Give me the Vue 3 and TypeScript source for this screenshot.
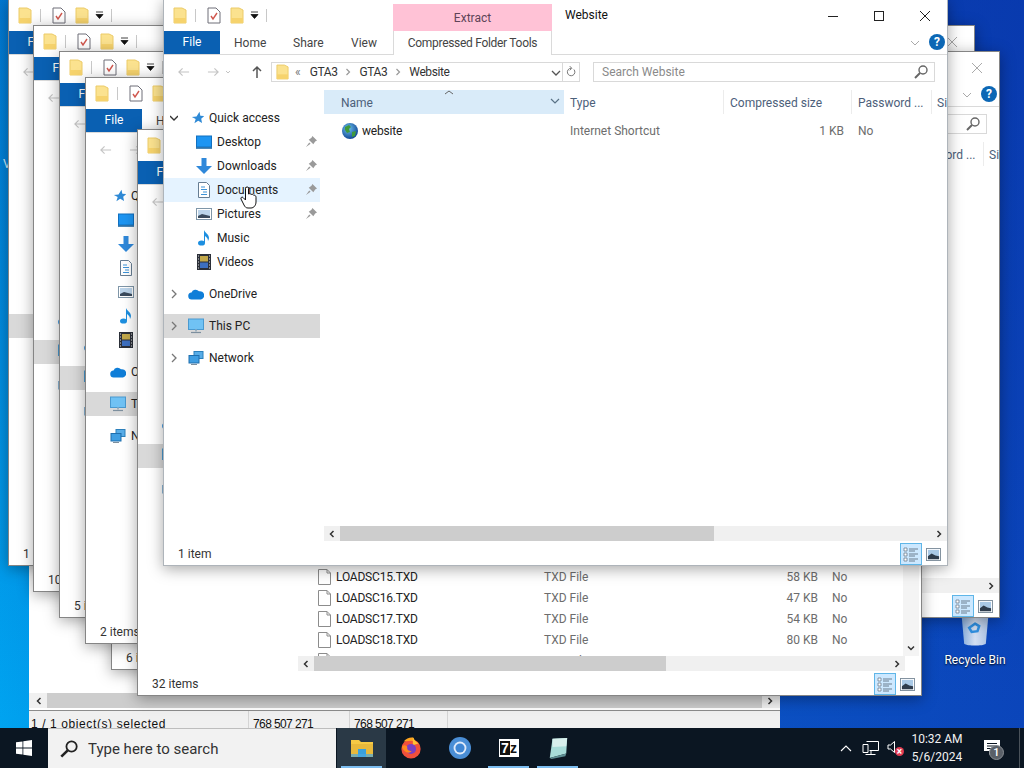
<template>
  <div class="desktop">
    <svg class="sprites" aria-hidden="true">
      <defs>
        <radialGradient id="globe-g" cx="40%" cy="35%" r="70%">
          <stop offset="0" stop-color="#6fc3f0" />
          <stop offset="1" stop-color="#0b3f8f" />
        </radialGradient>
        <linearGradient id="bin-g" x1="0" x2="1">
          <stop offset="0" stop-color="#8fb4dc" />
          <stop offset="0.5" stop-color="#e9f0f8" />
          <stop offset="1" stop-color="#b9cde6" />
        </linearGradient>
        <symbol id="i-folder" viewBox="0 0 14 17">
          <path d="M1 1h8l4 2v13H1z" fill="#fbe28f" stroke="#eccb68" />
          <path d="M1 11h12v5H1z" fill="#f6d36d" />
        </symbol>
        <symbol id="i-props" viewBox="0 0 14 17">
          <path d="M1 1h8l4 4v11H1z" fill="#fff" stroke="#6e6e78" />
          <path d="M4 9l2 3 4-6" fill="none" stroke="#d0574e" stroke-width="1.4" />
        </symbol>
        <symbol id="i-star" viewBox="0 0 16 16">
          <path transform="translate(3 1) scale(0.85)" d="M10 1l1 4.500 4.500.5-3.500 3 1 5-4.500-2.500L4 14.500l1.500-5L1 7l5.500-.5z" fill="#2f8ad6" />
        </symbol>
        <symbol id="i-desktop" viewBox="0 0 16 14">
          <rect x="0.500" y="1" width="15" height="11" fill="#1d95f2" stroke="#1170c0" />
          <path d="M0 13h16" stroke="#0f5f9f" stroke-width="1.500" />
        </symbol>
        <symbol id="i-download" viewBox="0 0 16 16">
          <path d="M5.500 0h5v8H16l-8 8-8-8h5.500z" fill="#2f88da" />
        </symbol>
        <symbol id="i-doc" viewBox="0 0 14 16">
          <path d="M1.500.5h8l3 3v12h-11z" fill="#fff" stroke="#667d93" />
          <path d="M4 5h4M4 7.500h6M6 10h4M4 12.500h6" stroke="#3d93d8" />
        </symbol>
        <symbol id="i-pictures" viewBox="0 0 16 12">
          <rect x="0.500" y="0.500" width="15" height="11" fill="#fff" stroke="#7f96a8" />
          <rect x="2" y="2" width="12" height="8" fill="#bcd4ea" />
          <path d="M2 8l4-2 4 1 4 1v2H2z" fill="#3a4a5c" />
        </symbol>
        <symbol id="i-music" viewBox="0 0 14 16">
          <ellipse cx="4.500" cy="13" rx="3.500" ry="2.600" fill="#1d8fe0" />
          <path d="M7 13V0c1 3 5 4 5 8 0 1-.5 2-1 3 0-3-2-4-3-5v7z" fill="#1d8fe0" />
        </symbol>
        <symbol id="i-video" viewBox="0 0 14 16">
          <rect width="14" height="16" fill="#2b2f38" />
          <rect x="3" y="2" width="8" height="5.500" fill="#c2a84a" />
          <rect x="3" y="8.500" width="8" height="5.500" fill="#3d6fc0" />
          <path d="M1 2h1M1 5h1M1 8h1M1 11h1M1 14h1M12 2h1M12 5h1M12 8h1M12 11h1M12 14h1" stroke="#ddd" />
        </symbol>
        <symbol id="i-cloud" viewBox="0 0 16 11">
          <path d="M4 11a3.500 3.500 0 0 1-.5-7A4.500 4.500 0 0 1 11 2.800 4 4 0 0 1 13 11z" fill="#0f7ed8" />
        </symbol>
        <symbol id="i-pc" viewBox="0 0 16 15">
          <rect x="0.500" y="0.500" width="15" height="10.500" fill="#70c2f4" stroke="#4a9ad0" />
          <path d="M3 14h10" stroke="#7d8f9e" stroke-width="1.200" />
          <path d="M7 11h2v2H7z" fill="#9db0be" />
        </symbol>
        <symbol id="i-network" viewBox="0 0 16 15">
          <rect x="6" y="1" width="9" height="7" fill="#58ade8" stroke="#2c80bc" />
          <rect x="1" y="5" width="10" height="7.500" fill="#3f9ee2" stroke="#1f6fae" />
          <path d="M3 14h6" stroke="#7d8f9e" />
        </symbol>
        <symbol id="i-pin" viewBox="0 0 12 12">
          <path d="M7 0l5 5-2 1-2 3-5-5 3-2zM3.500 7L0 12l5-3.500z" fill="#9a9a9a" />
        </symbol>
        <symbol id="i-globe" viewBox="0 0 16 16">
          <circle cx="8" cy="8" r="8" fill="url(#globe-g)" />
          <path d="M3 4l4-2 2 2-2 2 1 3-3 1-2-3zM10 9l4-1-1 5-3 1z" fill="#3f9a3d" />
        </symbol>
        <symbol id="i-file" viewBox="0 0 13 16">
          <path d="M.500.500h8.500l3.500 3.500v11.500h-12z" fill="#fff" stroke="#8c8c8c" />
          <path d="M9 .500V4h3.500" fill="none" stroke="#8c8c8c" />
        </symbol>
        <symbol id="i-search" viewBox="0 0 14 14">
          <circle cx="9" cy="5" r="4" fill="none" stroke="currentColor" stroke-width="1.400" />
          <path d="M6 8l-5 5" stroke="currentColor" stroke-width="2" />
        </symbol>
        <symbol id="i-details" viewBox="0 0 16 16">
          <path d="M1 2h3v3H1zM1 7h3v3H1zM1 12h3v3H1z" fill="#fff" stroke="#6d7f8f" stroke-width="0.800" />
          <path d="M6 3h9M6 5h6M6 8h9M6 10h6M6 13h9M6 15h6" stroke="#6d7f8f" />
        </symbol>
        <symbol id="i-thumb" viewBox="0 0 16 14">
          <rect x="0.500" y="0.500" width="15" height="13" fill="#fff" stroke="#7b8b99" />
          <rect x="2" y="2" width="12" height="10" fill="#a9c9e6" />
          <path d="M2 9l4-3 4 2 4 1v3H2z" fill="#2e3c4c" />
        </symbol>
        <symbol id="i-hand" viewBox="0 0 17 23">
          <path d="M6 1.500c1-1 2.500-.5 2.500 1V8c1-.5 2-.5 2.500.5 1-.5 2-.3 2.500.7 1-.3 2.500.3 2.500 2V16c0 3-2 6-5 6H8c-2 0-3-1-4-3L1 13c-.5-1.500 1-2.500 2-1.500L5.500 14V2.500z" fill="#fff" stroke="#111" stroke-width="1" />
        </symbol>
      </defs>
    </svg>

    <div class="faint-label">V</div>

    <div class="recycle">
      <svg class="recycle-icon" viewBox="0 0 36 48">
        <path d="M1 0h34l-4 44c-4 3-22 3-26 0z" fill="url(#bin-g)" opacity="0.9" />
        <path d="M18 20l5 3-2 6-7 1-3-5z" fill="none" stroke="#2f8fe0" stroke-width="3" />
      </svg>
      <span>Recycle Bin</span>
    </div>

    <!-- the archive window right at the back -->
    <div class="archive">
      <div class="arch-body"></div>
      <div class="hscroll arch-scroll">
        <svg class="scroll-arrow" viewBox="0 0 8 8"><path d="M5.500 1l-3 3 3 3" /></svg>
        <div class="arch-thumb"></div>
        <svg class="scroll-arrow" viewBox="0 0 8 8"><path d="M2.500 1l3 3-3 3" /></svg>
      </div>
      <div class="arch-status">
        <span class="arch-cell first">1 / 1 object(s) selected</span>
        <span class="arch-cell">768 507 271</span>
        <span class="arch-cell third">768 507 271</span>
        <span class="arch-cell last"></span>
      </div>
    </div>

    <section
      v-for="win in windows"
      :key="win.id"
      class="window"
      :class="{ active: win.active }"
      :style="{ left: `${win.x}px`, top: `${win.y}px`, width: `${win.w}px` }"
    >
      <div class="title-row">
        <svg class="qat-icon"><use href="#i-folder" /></svg>
        <i class="qat-sep"></i>
        <svg class="qat-icon"><use href="#i-props" /></svg>
        <svg class="qat-icon second"><use href="#i-folder" /></svg>
        <svg class="qat-drop" viewBox="0 0 9 9"><path d="M1 1h7M1 3.500h7l-3.500 4z" /></svg>
        <i class="qat-sep"></i>
        <div class="extract">Extract</div>
        <div class="title">{{ win.title }}</div>
        <div class="controls">
          <svg class="ctrl" viewBox="0 0 46 30"><path d="M18 15.500h10" /></svg>
          <svg class="ctrl" viewBox="0 0 46 30"><rect x="18.500" y="10.500" width="9" height="9" /></svg>
          <svg class="ctrl" viewBox="0 0 46 30"><path d="M18 10l10 10M28 10L18 20" /></svg>
        </div>
      </div>

      <div class="tabs">
        <div class="file-tab">File</div>
        <div class="tab home">Home</div>
        <div class="tab share">Share</div>
        <div class="tab view">View</div>
        <div class="tools-tab">Compressed Folder Tools</div>
        <svg class="ribbon-chev" viewBox="0 0 10 6"><path d="M1 1l4 4 4-4" /></svg>
        <div class="help">?</div>
      </div>

      <div class="address-row">
        <div class="nav-btns">
          <svg class="nav-arrow off" viewBox="0 0 14 12"><path d="M13 6H2M6 2L2 6l4 4" /></svg>
          <svg class="nav-arrow off fwd" viewBox="0 0 14 12"><path d="M1 6h11M8 2l4 4-4 4" /></svg>
          <svg class="nav-small" viewBox="0 0 6 4"><path d="M1 1l2 2 2-2" /></svg>
          <svg class="nav-arrow up" viewBox="0 0 12 14"><path d="M6 13V2M2 6l4-4 4 4" /></svg>
        </div>
        <div class="address">
          <svg class="addr-folder"><use href="#i-folder" /></svg>
          <span class="crumb-sep">&laquo;</span>
          <span class="crumb">GTA3</span>
          <svg class="crumb-chev" viewBox="0 0 6 8"><path d="M1.500 1l3 3-3 3" /></svg>
          <span class="crumb">GTA3</span>
          <svg class="crumb-chev" viewBox="0 0 6 8"><path d="M1.500 1l3 3-3 3" /></svg>
          <span class="crumb">{{ win.title }}</span>
          <svg class="addr-drop" viewBox="0 0 10 6"><path d="M1 1l4 4 4-4" /></svg>
          <svg class="addr-refresh" viewBox="0 0 12 14">
            <path d="M9.500 4a4.500 4.500 0 1 1-3.500-1.500" />
            <path d="M4.500 0l2.500 2.500-2.500 2.500" />
          </svg>
        </div>
        <div class="search">
          <span>Search {{ win.title }}</span>
          <svg class="search-icon"><use href="#i-search" /></svg>
        </div>
      </div>

      <div class="content">
        <aside class="tree">
          <div v-for="row in treeRows" :key="row.label" class="tree-row" :class="[row.kind, { hover: win.active && row.label === 'Documents', selected: row.label === 'This PC' }]">
            <svg v-if="row.kind === 'root' && win.active" class="twist" viewBox="0 0 8 10"><path :d="row.open ? 'M0 3l4 4 4-4' : 'M2 1l4 4-4 4'" /></svg>
            <svg class="tree-icon"><use :href="`#i-${row.icon}`" /></svg>
            <span class="tree-label">{{ row.label }}</span>
            <svg v-if="row.pinned" class="pin"><use href="#i-pin" /></svg>
          </div>
        </aside>

        <div class="pane">
          <div class="col-head">
            <div class="col name-col">
              Name
              <svg class="sort" viewBox="0 0 10 5"><path d="M1 4l4-3 4 3" /></svg>
              <svg class="name-drop" viewBox="0 0 10 6"><path d="M1 1l4 4 4-4" /></svg>
            </div>
            <div class="col">Type</div>
            <div class="col">Compressed size</div>
            <div class="col">Password ...</div>
            <div class="col last-col">Size</div>
          </div>
          <div class="rows-wrap">
            <div class="rows" :style="{ paddingTop: `${win.rowsTop}px` }">
              <div v-for="file in win.files" :key="file.name" class="file-row">
                <svg class="file-icon" :class="{ round: file.icon === 'globe' }"><use :href="`#i-${file.icon}`" /></svg>
                <span class="file-name">{{ file.name }}</span>
                <span class="file-meta">{{ file.type }}</span>
                <span class="file-meta size">{{ file.size }}</span>
                <span class="file-meta pass">No</span>
              </div>
            </div>
            <div v-if="win.vscroll" class="vscroll">
              <svg class="scroll-arrow" viewBox="0 0 8 8"><path d="M1 2.500l3 3 3-3" /></svg>
            </div>
          </div>
          <div class="hscroll" :class="{ inset: win.vscroll }">
            <svg class="scroll-arrow" viewBox="0 0 8 8"><path d="M5.500 1l-3 3 3 3" /></svg>
            <div class="track">
              <div class="thumb" :style="{ width: `${win.thumb}px` }"></div>
            </div>
            <svg class="scroll-arrow" viewBox="0 0 8 8"><path d="M2.500 1l3 3-3 3" /></svg>
          </div>
        </div>
      </div>

      <div class="status">
        <span class="status-text">{{ win.status }}</span>
        <div class="view-btn on"><svg class="view-icon"><use href="#i-details" /></svg></div>
        <div class="view-btn"><svg class="view-icon small"><use href="#i-thumb" /></svg></div>
      </div>
    </section>

    <svg class="hand"><use href="#i-hand" /></svg>

    <footer class="taskbar">
      <div class="start">
        <svg viewBox="0 0 16 16" class="win-logo">
          <path d="M0 2.300l6.500-.9v6.200H0zM7.300 1.300L16 0v7.600H7.300zM0 8.400h6.500v6.200L0 13.700zM7.300 8.400H16V16l-8.700-1.200z" />
        </svg>
      </div>
      <div class="task-search">
        <svg class="task-search-icon"><use href="#i-search" /></svg>
        <span>Type here to search</span>
      </div>
      <div class="task-btn running current">
        <svg viewBox="0 0 22 20" class="task-icon">
          <path d="M0 2h8l2 2h12v5H0z" fill="#f6c944" />
          <path d="M0 6h22v13H0z" fill="#e8b93c" />
          <path d="M7 11h8v8H7z" fill="#3aa0dc" />
          <path d="M0 16h22v3H0z" fill="#4aa8df" opacity="0.7" />
        </svg>
      </div>
      <div class="task-btn">
        <svg viewBox="0 0 24 24" class="task-icon">
          <circle cx="12" cy="13" r="10.500" fill="#f0503c" />
          <path d="M4 5c3-4 8-5 11-4l1 3c3 1 6 5 6 9 0-5-4-9-10-9z" fill="#ffa520" />
          <path d="M14 0c1 3 3 5 6 7l-6 2z" fill="#ffc234" />
          <circle cx="12" cy="13" r="5.500" fill="#7a3fc4" />
          <path d="M2 11c2-3 5-2 6 0-1 3 2 5 5 4-3 4-9 2-11-4z" fill="#ff8a1e" />
        </svg>
      </div>
      <div class="task-btn">
        <svg viewBox="0 0 24 24" class="task-icon">
          <circle cx="12" cy="12" r="12" fill="#4a8ed6" />
          <circle cx="12" cy="12" r="7" fill="#dfeafa" />
          <circle cx="12" cy="12" r="5" fill="#3f86d4" />
        </svg>
      </div>
      <div class="task-btn running">
        <div class="seven-z"><b>7</b><span>z</span></div>
      </div>
      <div class="task-btn running">
        <svg viewBox="0 0 24 24" class="task-icon">
          <path d="M6 2l16-1-1 17-18 5z" fill="#a8dcd8" />
          <path d="M6 2l16-1-1 9-15 1z" fill="#d8efec" />
          <path d="M3 23l18-5-1 3-15 3z" fill="#5f8f94" />
        </svg>
      </div>

      <div class="tray">
        <svg class="tray-chev" viewBox="0 0 12 7"><path d="M1 6l5-5 5 5" /></svg>
        <svg class="tray-net" viewBox="0 0 17 16">
          <path d="M4.500 1.500h12v9h-9M1 4.500h5v8H1zM3.500 14.500h10M9 10.500v4" />
        </svg>
        <div class="tray-vol">
          <svg viewBox="0 0 9 14"><path d="M1 5h2.500l4-3.500v11L3.500 9H1z" /></svg>
          <i>×</i>
        </div>
        <div class="clock">
          <span>10:32 AM</span>
          <span>5/6/2024</span>
        </div>
        <div class="notify">
          <svg viewBox="0 0 16 15"><path d="M0 0h16v11H8l-3 4v-4H0z" fill="#fff" /><path d="M3 3.500h10M3 6h10M3 8.500h6" stroke="#0b1622" /></svg>
          <b>1</b>
        </div>
        <i class="show-desk"></i>
      </div>
    </footer>
  </div>
</template>

<script setup lang="ts">
interface FileRow {
  name: string
  type: string
  size: string
  icon: string
}

interface Win {
  id: number
  x: number
  y: number
  w: number
  title: string
  status: string
  thumb: number
  rowsTop: number
  files: FileRow[]
  vscroll?: boolean
  active?: boolean
}

const treeRows = [
  { label: 'Quick access', icon: 'star', kind: 'root', open: true },
  { label: 'Desktop', icon: 'desktop', kind: 'leaf', pinned: true },
  { label: 'Downloads', icon: 'download', kind: 'leaf', pinned: true },
  { label: 'Documents', icon: 'doc', kind: 'leaf', pinned: true },
  { label: 'Pictures', icon: 'pictures', kind: 'leaf', pinned: true },
  { label: 'Music', icon: 'music', kind: 'leaf' },
  { label: 'Videos', icon: 'video', kind: 'leaf' },
  { label: 'OneDrive', icon: 'cloud', kind: 'root' },
  { label: 'This PC', icon: 'pc', kind: 'root' },
  { label: 'Network', icon: 'network', kind: 'root' },
]

const loadscreens: FileRow[] = [
  { name: 'LOADSC15.TXD', type: 'TXD File', size: '58 KB', icon: 'file' },
  { name: 'LOADSC16.TXD', type: 'TXD File', size: '47 KB', icon: 'file' },
  { name: 'LOADSC17.TXD', type: 'TXD File', size: '54 KB', icon: 'file' },
  { name: 'LOADSC18.TXD', type: 'TXD File', size: '80 KB', icon: 'file' },
  { name: 'LOADSC19.TXD', type: 'TXD File', size: '62 KB', icon: 'file' },
]

// back to front, the one with 6 items really does sit behind the one with 2
const windows: Win[] = [
  { id: 1, x: 8, y: -1, w: 785, title: 'GTA3', status: '1 item', thumb: 374, rowsTop: 6, files: [] },
  { id: 2, x: 33, y: 25, w: 942, title: 'GTA3', status: '10 items', thumb: 374, rowsTop: 6, files: [] },
  { id: 3, x: 59, y: 51, w: 941, title: 'GTA3', status: '5 items', thumb: 374, rowsTop: 6, files: [] },
  { id: 5, x: 111, y: 103, w: 785, title: 'GTA3', status: '6 items', thumb: 374, rowsTop: 6, files: [] },
  { id: 4, x: 85, y: 77, w: 785, title: 'GTA3', status: '2 items', thumb: 374, rowsTop: 6, files: [] },
  { id: 6, x: 137, y: 129, w: 785, title: 'GTA3', status: '32 items', thumb: 352, rowsTop: 322, files: loadscreens, vscroll: true },
  {
    id: 7,
    x: 163,
    y: -1,
    w: 785,
    title: 'Website',
    status: '1 item',
    thumb: 374,
    rowsTop: 6,
    active: true,
    files: [{ name: 'website', type: 'Internet Shortcut', size: '1 KB', icon: 'globe' }],
  },
]
</script>

<style>
html,
body {
  margin: 0;
  overflow: hidden;
}
</style>

<style scoped>
.desktop {
  position: relative;
  width: 1024px;
  height: 768px;
  overflow: hidden;
  font-family: 'Roboto', 'Liberation Sans', sans-serif;
  font-size: 12px;
  color: #222;
  background:
    linear-gradient(to bottom, rgba(5, 35, 150, 0.35), rgba(10, 80, 210, 0) 100%),
    linear-gradient(to right, #00a6f2 0, #00a0ee 40px, #0a5ccb 500px, #0b46bb 1024px);
}

.sprites {
  position: absolute;
  width: 0;
  height: 0;
}

.faint-label {
  position: absolute;
  left: 3px;
  top: 157px;
  color: #d7eefc;
  font-size: 12px;
}

.recycle {
  position: absolute;
  left: 936px;
  top: 607px;
  width: 78px;
  display: flex;
  flex-direction: column;
  align-items: center;
  color: #fff;
  text-shadow: 0 1px 2px #000;
}

.recycle-icon {
  width: 34px;
  height: 40px;
}

.recycle span {
  margin-top: 6px;
  line-height: 15px;
}

/* back window */
.archive {
  position: absolute;
  left: 29px;
  top: 540px;
  width: 751px;
  height: 188px;
  display: flex;
  flex-direction: column;
  background: #fff;
}

.arch-body {
  flex: 1;
}

.arch-scroll {
  flex: none;
  height: 15px;
  margin-bottom: 2px;
  padding: 0 2px;
  background: #f0f0f0;
}

.arch-thumb {
  flex: 1;
  height: 15px;
  background: #cdcdcd;
}

.arch-status {
  flex: none;
  height: 17px;
  display: flex;
  background: #f0f0f0;
  border-top: 1px solid #8c8c8c;
  font-family: 'Liberation Sans', sans-serif;
  color: #111;
  overflow: hidden;
}

.arch-cell {
  width: 96px;
  padding: 6px 0 0 4px;
  border-right: 1px solid #d4d4d4;
  white-space: nowrap;
  letter-spacing: -0.6px;
}

.arch-cell.first {
  width: 217px;
  padding-left: 2px;
  letter-spacing: 0.6px;
}

.arch-cell.third {
  width: 93px;
}

.arch-cell.last {
  flex: 1;
  border-right: 0;
}

/* explorer windows */
.window {
  position: absolute;
  isolation: isolate;
  height: 567px;
  box-sizing: border-box;
  display: flex;
  flex-direction: column;
  background: #fff;
  border: 1px solid #858585;
  box-shadow: 0 3px 14px rgba(0, 0, 0, 0.35);
  overflow: hidden;
}

.window.active {
  border-color: #aeb4ba;
}

.title-row {
  flex: none;
  height: 31px;
  display: flex;
  align-items: center;
  padding-left: 9px;
  position: relative;
}

.qat-icon {
  width: 14px;
  height: 17px;
  margin-right: 8px;
}

.qat-icon.second {
  margin-left: 1px;
  margin-right: 6px;
}

.qat-sep {
  width: 1px;
  height: 13px;
  margin-right: 11px;
  background: #c8c8c8;
}

.qat-drop {
  width: 9px;
  height: 9px;
  margin-right: 7px;
}

.qat-drop path {
  fill: #111;
  stroke: #111;
  stroke-width: 0.8;
}

.extract {
  position: absolute;
  left: 229px;
  top: 4px;
  width: 159px;
  height: 27px;
  display: flex;
  align-items: center;
  justify-content: center;
  background: #ffc2d6;
  color: #5e4458;
}

.title {
  position: absolute;
  left: 401px;
  top: 8px;
  color: #111;
}

.controls {
  margin-left: auto;
  margin-right: -1px;
  display: flex;
}

.ctrl {
  width: 46px;
  height: 30px;
  fill: none;
  stroke: #222;
}

.window:not(.active) .ctrl {
  stroke: #aaa;
}

.tabs {
  flex: none;
  height: 23px;
  display: flex;
  align-items: center;
  position: relative;
  color: #444;
}

.file-tab {
  width: 56px;
  height: 23px;
  line-height: 23px;
  text-align: center;
  background: #0a60b2;
  color: #fff;
}

.tab {
  position: absolute;
  top: 5px;
}

.tab.home {
  left: 70px;
}

.tab.share {
  left: 129px;
}

.tab.view {
  left: 187px;
}

.tools-tab {
  position: absolute;
  left: 229px;
  top: 0;
  width: 159px;
  height: 24px;
  box-sizing: border-box;
  padding-top: 1px;
  line-height: 23px;
  text-align: center;
  letter-spacing: -0.3px;
  white-space: nowrap;
  background: #fff;
  border: 1px solid #dadada;
  border-width: 0 1px;
  z-index: 1;
}

.ribbon-chev {
  position: absolute;
  right: 27px;
  top: 9px;
  width: 10px;
  height: 6px;
  fill: none;
  stroke: #aaa;
}

.help {
  position: absolute;
  right: 2px;
  top: 3px;
  width: 16px;
  height: 16px;
  border-radius: 50%;
  background: #0c67b5;
  color: #fff;
  font-weight: 700;
  font-size: 12px;
  line-height: 16px;
  text-align: center;
}

.address-row {
  flex: none;
  height: 34px;
  box-sizing: border-box;
  border-top: 1px solid #dadada;
  display: flex;
  align-items: flex-start;
  padding: 7px 12px 0 0;
}

.nav-btns {
  flex: none;
  width: 107px;
  height: 20px;
  display: flex;
  align-items: center;
  padding-left: 13px;
  box-sizing: border-box;
}

.nav-arrow {
  width: 13px;
  height: 12px;
  fill: none;
  stroke: #333;
  stroke-width: 1.200;
}

.nav-arrow.off {
  stroke: #c4c4c4;
}

.nav-arrow.fwd {
  margin-left: 17px;
}

.nav-small {
  width: 6px;
  height: 4px;
  margin-left: 5px;
  fill: none;
  stroke: #c4c4c4;
}

.nav-arrow.up {
  width: 12px;
  height: 14px;
  margin-left: 20px;
  stroke: #555;
  stroke-width: 1.500;
}

.address {
  flex: 1;
  height: 20px;
  box-sizing: border-box;
  margin-right: 13px;
  display: flex;
  align-items: center;
  border: 1px solid #d9d9d9;
  padding-left: 4px;
  color: #333;
  min-width: 0;
  position: relative;
}

.addr-folder {
  flex: none;
  width: 13px;
  height: 16px;
}

.crumb {
  letter-spacing: -0.4px;
}

.crumb-sep {
  color: #777;
  margin: 0 9px 0 6px;
}

.crumb-chev {
  flex: none;
  width: 6px;
  height: 8px;
  margin: 0 8px;
  fill: none;
  stroke: #999;
  stroke-width: 1.200;
}

.addr-drop {
  position: absolute;
  right: 18px;
  top: 7px;
  width: 10px;
  height: 6px;
  fill: none;
  stroke: #555;
  stroke-width: 1.300;
}

.addr-refresh {
  position: absolute;
  right: 1px;
  top: 0;
  width: 16px;
  height: 18px;
  padding: 2px 2px 2px 3px;
  box-sizing: border-box;
  border-left: 1px solid #d9d9d9;
  fill: none;
  stroke: #777;
  stroke-width: 1.200;
}

.search {
  flex: none;
  width: 342px;
  height: 20px;
  box-sizing: border-box;
  display: flex;
  align-items: center;
  justify-content: space-between;
  border: 1px solid #d9d9d9;
  padding: 0 6px 0 8px;
  color: #8a8a8a;
}

.search-icon {
  width: 14px;
  height: 14px;
  color: #666;
}

.content {
  flex: 1;
  min-height: 0;
  display: flex;
}

.tree {
  flex: none;
  width: 160px;
  box-sizing: border-box;
  padding: 18px 4px 0 0;
  color: #222;
}

.tree-row {
  height: 24px;
  display: flex;
  align-items: center;
  position: relative;
}

.tree-row.hover {
  background: #e5f3ff;
}

.tree-row.selected {
  background: #d9d9d9;
}

.tree-row.root {
  padding-left: 24px;
}

.tree-row.leaf {
  padding-left: 32px;
}

.tree-row:nth-child(8),
.tree-row:nth-child(9),
.tree-row:nth-child(10) {
  margin-top: 8px;
}

.twist {
  position: absolute;
  left: 6px;
  top: 7px;
  width: 8px;
  height: 10px;
  fill: none;
  stroke: #777;
  stroke-width: 1.300;
}

.tree-row:first-child .twist {
  stroke: #333;
}

.tree-icon {
  width: 16px;
  height: 16px;
  margin-right: 5px;
}

.pin {
  position: absolute;
  left: 142px;
  top: 6px;
  width: 11px;
  height: 11px;
}

.pane {
  flex: 1;
  min-width: 0;
  display: flex;
  flex-direction: column;
  padding-top: 2px;
}

.col-head {
  flex: none;
  height: 24px;
  display: grid;
  grid-template-columns: minmax(0, 1fr) 160px 128px 80px 15px;
  color: #4c607a;
}

.col {
  box-sizing: border-box;
  padding: 6px 0 0 6px;
  border-right: 1px solid #ececec;
  white-space: nowrap;
  overflow: hidden;
}

.last-col {
  border-right: 0;
  padding-left: 5px;
}

.name-col {
  position: relative;
  padding-left: 17px;
  background: #d9ebf9;
  border-right: 0;
}

.sort {
  position: absolute;
  left: 120px;
  top: 0;
  width: 10px;
  height: 5px;
  fill: none;
  stroke: #666;
}

.name-drop {
  position: absolute;
  right: 4px;
  top: 8px;
  width: 10px;
  height: 6px;
  fill: none;
  stroke: #5a7286;
  stroke-width: 1.200;
}

.rows-wrap {
  flex: 1;
  min-height: 0;
  display: flex;
  position: relative;
}

.rows {
  flex: 1;
  min-width: 0;
  overflow: hidden;
}

.file-row {
  height: 21px;
  display: grid;
  grid-template-columns: minmax(0, 1fr) 160px 128px 80px 15px;
  align-items: center;
  position: relative;
  color: #6d6d6d;
}

.file-icon {
  position: absolute;
  left: 20px;
  top: 3px;
  width: 13px;
  height: 16px;
}

.file-icon.round {
  left: 18px;
  width: 16px;
}

.file-name {
  padding-left: 38px;
  letter-spacing: -0.2px;
  color: #222;
}

.file-meta {
  padding-left: 6px;
  white-space: nowrap;
}

.file-meta.size {
  text-align: right;
  padding: 0 8px 0 0;
}

.vscroll {
  position: absolute;
  right: 2px;
  top: 0;
  bottom: 0;
  width: 16px;
  display: flex;
  flex-direction: column;
  justify-content: flex-end;
  align-items: center;
  background: #f4f4f4;
}

.hscroll {
  flex: none;
  height: 15px;
  margin-bottom: 2px;
  display: flex;
  align-items: center;
  background: #f0f0f0;
}

.hscroll.inset {
  margin-right: 16px;
}

.track {
  flex: 1;
  height: 15px;
}

.thumb {
  height: 15px;
  background: #cdcdcd;
}

.scroll-arrow {
  flex: none;
  width: 16px;
  height: 8px;
  fill: none;
  stroke: #333;
  stroke-width: 1.500;
}

.vscroll .scroll-arrow {
  width: 8px;
  height: 8px;
  margin-bottom: 4px;
}

.status {
  flex: none;
  height: 22px;
  display: flex;
  align-items: center;
  padding-right: 3px;
  color: #333;
}

.status-text {
  margin-left: 14px;
  margin-right: auto;
}

.view-btn {
  width: 22px;
  height: 22px;
  box-sizing: border-box;
  display: flex;
  align-items: center;
  justify-content: center;
}

.view-btn.on {
  background: #cce8ff;
  border: 1px solid #5fb6e8;
}

.view-icon {
  width: 16px;
  height: 16px;
}

.view-icon.small {
  width: 15px;
  height: 13px;
}

.hand {
  position: absolute;
  left: 240px;
  top: 186px;
  width: 17px;
  height: 23px;
}

/* taskbar */
.taskbar {
  position: absolute;
  left: 0;
  right: 0;
  bottom: 0;
  height: 40px;
  display: flex;
  background: #0b1622;
  color: #fff;
}

.start {
  flex: none;
  width: 48px;
  display: flex;
  align-items: center;
  justify-content: center;
}

.win-logo {
  width: 16px;
  height: 16px;
  fill: #fff;
}

.task-search {
  flex: none;
  width: 288px;
  margin-right: 1px;
  box-sizing: border-box;
  display: flex;
  align-items: center;
  padding-left: 12px;
  background: #f2f2f2;
  border-top: 1px solid #bdbdbd;
  color: #333;
  font-size: 15px;
}

.task-search-icon {
  width: 18px;
  height: 18px;
  margin-right: 10px;
  color: #222;
}

.task-btn {
  flex: none;
  width: 49px;
  display: flex;
  align-items: center;
  justify-content: center;
  position: relative;
}

.task-btn.current {
  background: #2a3946;
}

.task-btn.running::after {
  content: '';
  position: absolute;
  left: 4px;
  right: 4px;
  bottom: 0;
  height: 2px;
  background: #7cbdf0;
}

.task-icon {
  width: 22px;
  height: 22px;
}

.seven-z {
  width: 20px;
  height: 18px;
  display: flex;
  align-items: center;
  justify-content: center;
  background: #fff;
  color: #111;
  font-family: 'Liberation Sans', sans-serif;
  font-weight: 700;
  font-size: 14px;
  line-height: 1;
}

.seven-z b {
  background: #111;
  color: #fff;
  padding: 0 1px;
}

.tray {
  margin-left: auto;
  display: flex;
  align-items: center;
  position: relative;
  height: 40px;
}

.tray-chev {
  width: 12px;
  height: 7px;
  margin-right: 10px;
  fill: none;
  stroke: #fff;
  stroke-width: 1.100;
}

.tray-net {
  width: 17px;
  height: 16px;
  margin-right: 8px;
  fill: none;
  stroke: #fff;
}

.tray-vol {
  position: relative;
  width: 17px;
  height: 16px;
}

.tray-vol svg {
  width: 9px;
  height: 14px;
  fill: none;
  stroke: #fff;
}

.tray-vol i {
  position: absolute;
  left: 8px;
  top: 7px;
  width: 9px;
  height: 9px;
  border-radius: 50%;
  background: #e23b52;
  color: #fff;
  font-style: normal;
  font-size: 10px;
  font-weight: 700;
  line-height: 9px;
  text-align: center;
}

.clock {
  width: 74px;
  margin-left: -4px;
  display: flex;
  flex-direction: column;
  align-items: center;
  line-height: 18px;
  color: #f2f2f2;
}

.notify {
  position: relative;
  width: 22px;
  height: 24px;
  margin-left: 8px;
}

.notify svg {
  position: absolute;
  left: 2px;
  top: 4px;
  width: 16px;
  height: 15px;
}

.notify b {
  position: absolute;
  left: 7px;
  top: 9px;
  width: 15px;
  height: 15px;
  border-radius: 50%;
  background: #5a6068;
  border: 1px solid #8a8f94;
  box-sizing: border-box;
  color: #fff;
  font-size: 11px;
  font-weight: 500;
  line-height: 13px;
  text-align: center;
}

.show-desk {
  width: 1px;
  height: 40px;
  margin-left: 15px;
  margin-right: 4px;
  background: #4a525a;
}
</style>
